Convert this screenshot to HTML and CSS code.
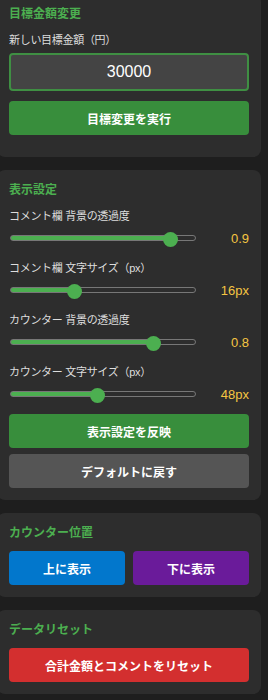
FILE: index.html
```html
<!DOCTYPE html>
<html lang="ja">
<head>
    <meta charset="UTF-8">
    <meta name="viewport" content="width=device-width, initial-scale=1.0">
    <title>設定パネル</title>
    <link rel="stylesheet" href="styles.css">
</head>
<body>
    <div class="panel">
        <div class="card">
            <h3>目標金額変更</h3>
            <label class="field-label" for="goal">新しい目標金額（円）</label>
            <input type="number" id="goal" class="goal-input" value="30000">
            <button class="btn btn-green btn-goal">目標変更を実行</button>
        </div>

        <div class="card">
            <h3>表示設定</h3>

            <div class="setting">
                <div class="field-label">コメント欄 背景の透過度</div>
                <div class="slider-row">
                    <input type="range" min="0" max="1" step="0.1" value="0.9" style="--v: 0.9">
                    <span class="value">0.9</span>
                </div>
            </div>

            <div class="setting">
                <div class="field-label">コメント欄 文字サイズ（px）</div>
                <div class="slider-row">
                    <input type="range" min="8" max="32" value="16" style="--v: 0.333">
                    <span class="value">16px</span>
                </div>
            </div>

            <div class="setting">
                <div class="field-label">カウンター 背景の透過度</div>
                <div class="slider-row">
                    <input type="range" min="0" max="1" step="0.1" value="0.8" style="--v: 0.8">
                    <span class="value">0.8</span>
                </div>
            </div>

            <div class="setting last">
                <div class="field-label">カウンター 文字サイズ（px）</div>
                <div class="slider-row">
                    <input type="range" min="20" max="80" value="48" style="--v: 0.467">
                    <span class="value">48px</span>
                </div>
            </div>

            <button class="btn btn-green">表示設定を反映</button>
            <button class="btn btn-gray">デフォルトに戻す</button>
        </div>

        <div class="card">
            <h3>カウンター位置</h3>
            <div class="btn-pair">
                <button class="btn btn-blue">上に表示</button>
                <button class="btn btn-purple">下に表示</button>
            </div>
        </div>

        <div class="card">
            <h3>データリセット</h3>
            <button class="btn btn-red">合計金額とコメントをリセット</button>
        </div>
    </div>
</body>
</html>
```

FILE: styles.css
```css
body {
    margin: 0;
    background-color: #1e1e1e;
    font-family: "Liberation Sans", "Noto Sans CJK JP", sans-serif;
    color: #ddd;
    overflow: hidden;
}

.panel {
    width: 264px;
    margin: -6px 0 0 -3px;
}

.card {
    background-color: #2d2d2d;
    border-radius: 8px;
    padding: 12px;
    margin-bottom: 13px;
}

.card h3 {
    margin: 0 0 10px;
    font-size: 12px;
    line-height: 16px;
    color: #4caf50;
}

.field-label {
    display: block;
    font-size: 11px;
    line-height: 16px;
    letter-spacing: -0.3px;
    color: #ddd;
    margin-bottom: 5px;
}

.goal-input {
    display: block;
    width: 100%;
    height: 38px;
    box-sizing: border-box;
    background-color: #444;
    border: 2px solid #3f8f43;
    border-radius: 4px;
    color: #fff;
    font-family: inherit;
    font-size: 16px;
    text-align: center;
    margin-bottom: 10px;
    -moz-appearance: textfield;
}

.goal-input::-webkit-inner-spin-button,
.goal-input::-webkit-outer-spin-button {
    -webkit-appearance: none;
    margin: 0;
}

.setting {
    margin-bottom: 12px;
}

.setting .field-label {
    margin-bottom: 4px;
}

.setting.last {
    margin-bottom: 10px;
}

.slider-row {
    display: flex;
    align-items: center;
    height: 20px;
}

.slider-row input[type="range"] {
    -webkit-appearance: none;
    appearance: none;
    flex: 1;
    height: 20px;
    margin: 0 0 0 1px;
    background: transparent;
}

.slider-row input[type="range"]::-webkit-slider-runnable-track {
    height: 6px;
    border: 1px solid #777;
    border-radius: 4px;
    background: linear-gradient(to right, #4caf50 calc(7px + var(--v) * (100% - 14px)), #2d2d2d 0);
}

.slider-row input[type="range"]::-webkit-slider-thumb {
    -webkit-appearance: none;
    width: 15px;
    height: 15px;
    margin-top: -4.5px;
    border-radius: 50%;
    background-color: #4caf50;
}

.value {
    width: 53px;
    text-align: right;
    font-size: 13px;
    color: #f5c542;
}

.btn {
    display: block;
    width: 100%;
    height: 34px;
    border: none;
    border-radius: 4px;
    color: #fff;
    font-family: inherit;
    font-size: 12px;
    font-weight: bold;
    cursor: pointer;
}

.btn + .btn {
    margin-top: 6px;
}

.btn-goal {
    margin-bottom: 10px;
}

.btn-green {
    background-color: #388e3c;
}

.btn-gray {
    background-color: #555;
}

.btn-pair {
    display: flex;
    gap: 8px;
}

.btn-pair .btn + .btn {
    margin-top: 0;
}

.btn-blue {
    background-color: #0277cc;
}

.btn-purple {
    background-color: #6a1b9a;
}

.btn-red {
    background-color: #d32f2f;
}
```
